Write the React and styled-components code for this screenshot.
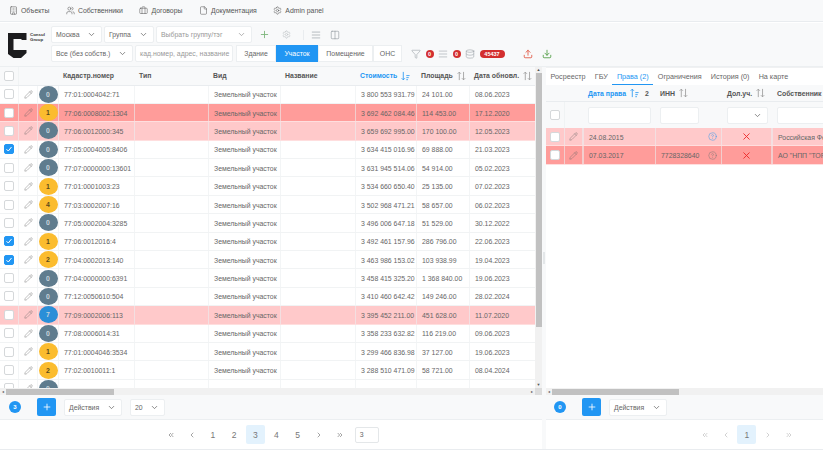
import styled, { createGlobalStyle } from "styled-components";
import {
  Building, Users, Briefcase, File, Settings, ChevronDown, Plus, AlignJustify, Columns2,
  Filter, Database, Upload, Download, Pencil, CircleHelp, X, ChevronsLeft, ChevronLeft,
  ChevronRight, ChevronsRight,
} from "lucide-react";

const Global = createGlobalStyle`
  * { box-sizing: border-box; }
  html, body { margin: 0; padding: 0; background: #fff; }
  body { font-family: "Liberation Sans", Arial, sans-serif; color: #666; overflow: hidden; }
`;

const rows = [
  ["77:01:0004042:71", "3 800 553 931.79", "24 101.00", "08.06.2023", 0],
  ["77:06:0008002:1304", "3 692 462 084.46", "114 453.00", "17.12.2020", 1, "red"],
  ["77:06:0012000:345", "3 659 692 995.00", "170 100.00", "12.05.2023", 0, "pink"],
  ["77:05:0004005:8406", "3 634 415 016.96", "69 888.00", "21.03.2023", 0, "", true],
  ["77:07:0000000:13601", "3 631 945 514.06", "54 914.00", "05.02.2023", 0],
  ["77:01:0001003:23", "3 534 660 650.40", "25 135.00", "07.02.2023", 1],
  ["77:03:0002007:16", "3 502 968 471.21", "58 657.00", "06.02.2023", 4],
  ["77:05:0002004:3285", "3 496 006 647.18", "51 529.00", "30.12.2022", 0],
  ["77:06:0012016:4", "3 492 461 157.96", "286 796.00", "22.06.2023", 1, "", true],
  ["77:04:0002013:140", "3 463 986 153.02", "103 938.99", "19.04.2023", 2, "", true],
  ["77:04:0000000:6391", "3 458 415 325.20", "1 368 840.00", "19.06.2023", 0],
  ["77:12:0050610:504", "3 410 460 642.42", "149 246.00", "28.02.2024", 0],
  ["77:09:0002006:113", "3 395 452 211.00", "451 628.00", "11.07.2020", 7, "pink"],
  ["77:08:0006014:31", "3 358 233 632.82", "116 219.00", "09.06.2023", 0],
  ["77:01:0004046:3534", "3 299 466 836.98", "37 127.00", "19.06.2023", 1],
  ["77:02:0010011:1", "3 288 510 471.09", "58 721.00", "08.04.2024", 2],
  ["", "", "", "", 0],
];

const navItems = [
  [Building, "Объекты"],
  [Users, "Собственники"],
  [Briefcase, "Договоры"],
  [File, "Документация"],
  [Settings, "Admin panel"],
];

// dir: "up" / "down" is the active sort direction, nothing means not sorted
function SortIcon({ dir }) {
  const c = dir ? "#2196f3" : "#999";
  return (
    <SortSvg width="9" height="10" viewBox="0 0 11 11" fill="none" stroke={c} strokeWidth="1">
      {dir === "down" && <path d="M2.8 0.5V10.2M0.8 8.2L2.8 10.2L4.8 8.2" />}
      {dir !== "down" && <path d="M2.8 10.5V0.8M0.8 2.8L2.8 0.8L4.8 2.8" />}
      {dir
        ? <path d="M6.5 5h4M6.5 7.5h3M6.5 10h2" />
        : <path d="M8 0.5V10.2M6 8.2L8 10.2L10 8.2" />}
    </SortSvg>
  );
}

function Check({ on }) {
  return (
    <CheckBox $on={on}>
      {on && (
        <svg width="8" height="8" viewBox="0 0 8 8" fill="none" stroke="#fff" strokeWidth="1">
          <path d="M1.5 4.2L3.3 6L6.5 2" />
        </svg>
      )}
    </CheckBox>
  );
}

export default function App() {
  return (
    <Page>
      <Global />
      <Nav>
        {navItems.map(([Icon, label]) => (
          <NavItem key={label}>
            <Icon size={9} strokeWidth={1.4} />
            {label}
          </NavItem>
        ))}
      </Nav>

      <Toolbar>
        <Logo>
          <svg width="19" height="25" viewBox="0 0 19 25">
            <path d="M0 0H18.5V7H13.5V6H5.5V17H18.5V20L13 25H5.5L0 21Z" fill="#1c1c1e" />
          </svg>
          <LogoText>Consul<br />Group</LogoText>
        </Logo>
        <Filters>
          <FilterRow>
            <Select $w={51}>Москва<ChevronDown size={9} /></Select>
            <Select $w={50}>Группа<ChevronDown size={9} /></Select>
            <Select $w={96} $muted>Выбрать группу/тэг<ChevronDown size={9} /></Select>
            <ToolIcon $ml={5} $color="#7fb77e"><Plus size={11} /></ToolIcon>
            <ToolIcon $ml={9.5} $color="#c4c8cb"><Settings size={9} /></ToolIcon>
            <ToolSep />
            <ToolIcon $ml={5.5}><AlignJustify size={10} strokeWidth={1.4} /></ToolIcon>
            <ToolIcon $ml={7}><Columns2 size={10} strokeWidth={1.4} /></ToolIcon>
          </FilterRow>
          <FilterRow>
            <Select $w={82}>Все (без собств.)<ChevronDown size={9} /></Select>
            <SearchBox>кад.номер, адрес, название</SearchBox>
            <Segments>
              <Segment $w={40}>Здание</Segment>
              <Segment $w={42} $active>Участок</Segment>
              <Segment $w={55}>Помещение</Segment>
              <Segment $w={29}>ОНС</Segment>
            </Segments>
            <Stats>
              <Filter size={10} strokeWidth={1.2} />
              <RedDot>0</RedDot>
              <AlignJustify size={10} strokeWidth={1.2} />
              <RedDot>0</RedDot>
              <Database size={10} strokeWidth={1.2} />
              <RedPill>45437</RedPill>
              <ExportIcon $color="#e0533d" $gap={14}><Upload size={10} /></ExportIcon>
              <ExportIcon $color="#4c9a3f" $gap={4.5}><Download size={10} /></ExportIcon>
            </Stats>
          </FilterRow>
        </Filters>
      </Toolbar>

      <Main>
        <LeftPanel>
          <TableArea>
            <TableWrap>
              <HeadRow>
                <CenterCell><Check /></CenterCell>
                <HeadCell />
                <HeadCell />
                <HeadCell>Кадастр.номер</HeadCell>
                <HeadCell>Тип</HeadCell>
                <HeadCell>Вид</HeadCell>
                <HeadCell>Название</HeadCell>
                <HeadCell $active>Стоимость <SortIcon dir="down" /></HeadCell>
                <HeadCell>Площадь <SortIcon /></HeadCell>
                <HeadCell>Дата обновл. <SortIcon /></HeadCell>
              </HeadRow>
              {rows.map((r, i) => (
                <Row key={i} $tone={r[5]}>
                  <CenterCell><Check on={r[6]} /></CenterCell>
                  <CenterCell><Pencil size={9} strokeWidth={1.1} color="#666" /></CenterCell>
                  <BadgeCell><Badge $n={r[4]}>{r[4]}</Badge></BadgeCell>
                  <Cell>{r[0]}</Cell>
                  <Cell />
                  <Cell>{r[0] && "Земельный участок"}</Cell>
                  <Cell />
                  <Cell>{r[1]}</Cell>
                  <Cell>{r[2]}</Cell>
                  <Cell>{r[3]}</Cell>
                </Row>
              ))}
            </TableWrap>
            <VScroll>
              <ScrollArrow>▲</ScrollArrow>
              <VThumb />
              <VSpacer />
              <ScrollArrow>▼</ScrollArrow>
            </VScroll>
          </TableArea>
          <HScroll>
            <ScrollArrow>◂</ScrollArrow>
            <HThumb $w={108} />
            <HSpacer />
            <ScrollArrow>▸</ScrollArrow>
            <ScrollCorner />
          </HScroll>
          <Actions>
            <CountDot>3</CountDot>
            <AddButton><Plus size={10} /></AddButton>
            <Select $w={58}>Действия<ChevronDown size={9} /></Select>
            <Select $w={35}>20<ChevronDown size={9} /></Select>
          </Actions>
          <Pager>
            <PageItem><ChevronsLeft size={8} /></PageItem>
            <PageItem><ChevronLeft size={8} /></PageItem>
            <PageItem>1</PageItem>
            <PageItem>2</PageItem>
            <PageItem $active>3</PageItem>
            <PageItem>4</PageItem>
            <PageItem>5</PageItem>
            <PageItem><ChevronRight size={8} /></PageItem>
            <PageItem><ChevronsRight size={8} /></PageItem>
            <PageInput>3</PageInput>
          </Pager>
        </LeftPanel>

        <Gutter><GutterGrip /></Gutter>

        <RightPanel>
          <TabsBar>
            <Tab>Росреестр</Tab>
            <Tab>ГБУ</Tab>
            <Tab $active>Права (2)</Tab>
            <Tab>Ограничения</Tab>
            <Tab>История (0)</Tab>
            <Tab>На карте</Tab>
          </TabsBar>
          <RightBody>
            <RightHead>
              <span /><span />
              <RightHeadCell $active>Дата права <SortIcon dir="up" /><SortOrder>2</SortOrder></RightHeadCell>
              <RightHeadCell>ИНН <SortIcon /></RightHeadCell>
              <span />
              <RightHeadCell>Дол.уч. <SortIcon /></RightHeadCell>
              <RightHeadCell>Собственник</RightHeadCell>
            </RightHead>
            <RightFilter>
              <CenterCell><Check /></CenterCell>
              <span />
              <FilterCell><FilterInput /></FilterCell>
              <FilterCell><FilterInput /></FilterCell>
              <span />
              <FilterCell><FilterInput><ChevronDown size={9} /></FilterInput></FilterCell>
              <FilterCell><FilterInput /></FilterCell>
            </RightFilter>
            <RightRow $tone="pink">
              <CenterCell><Check /></CenterCell>
              <CenterCell><Pencil size={9} strokeWidth={1.1} color="#666" /></CenterCell>
              <Cell>24.08.2015</Cell>
              <Cell />
              <CenterCell><CircleHelp size={9} color="#2196f3" strokeWidth={1.2} /></CenterCell>
              <CenterCell><X size={11} color="#ee2b2b" strokeWidth={2} /></CenterCell>
              <OwnerCell>Российская Федерация</OwnerCell>
            </RightRow>
            <RightRow $tone="red">
              <CenterCell><Check /></CenterCell>
              <CenterCell><Pencil size={9} strokeWidth={1.1} color="#666" /></CenterCell>
              <Cell>07.03.2017</Cell>
              <Cell>7728328640</Cell>
              <CenterCell><CircleHelp size={9} color="#777" strokeWidth={1.2} /></CenterCell>
              <CenterCell><X size={11} color="#ee2b2b" strokeWidth={2} /></CenterCell>
              <OwnerCell>АО "НПП "ТОРИЙ"</OwnerCell>
            </RightRow>
          </RightBody>
          <HScroll>
            <ScrollArrow>◂</ScrollArrow>
            <HThumb $w={127} />
          </HScroll>
          <RightActions>
            <CountDot>0</CountDot>
            <AddButton><Plus size={10} /></AddButton>
            <Select $w={58}>Действия<ChevronDown size={9} /></Select>
          </RightActions>
          <RightPager>
            <PageItem $faint><ChevronsLeft size={8} /></PageItem>
            <PageItem $faint><ChevronLeft size={8} /></PageItem>
            <PageItem $active>1</PageItem>
            <PageItem $faint><ChevronRight size={8} /></PageItem>
            <PageItem $faint><ChevronsRight size={8} /></PageItem>
          </RightPager>
        </RightPanel>
      </Main>
    </Page>
  );
}

const toneColor = { red: "#ff9c9a", pink: "#ffc9ca" };
const badgeColor = (n) => (n === 0 ? "#5f7c8e" : n === 7 ? "#2a8fd8" : "#fbbc2e");

const Page = styled.div`
  width: 823px;
  height: 450px;
  display: flex;
  flex-direction: column;
  overflow: hidden;
  background: #fff;
  font-size: 6.9px;
`;

const Nav = styled.nav`
  height: 22px;
  flex: none;
  display: flex;
  align-items: center;
  gap: 16.5px;
  padding-left: 9px;
  background: #f8f9fa;
  border-bottom: 1px solid #e9ecef;
`;

const NavItem = styled.div`
  display: flex;
  align-items: center;
  gap: 3px;
  color: #555;
`;

const Toolbar = styled.div`
  height: 45px;
  flex: none;
  display: flex;
  background: #f8f9fa;
  border-top: 1px solid #fff;
  border-bottom: 1px solid #eceff1;
`;

const Logo = styled.div`
  width: 51px;
  flex: none;
  display: flex;
  align-items: flex-start;
  gap: 3px;
  padding: 10px 0 0 8px;
`;

const LogoText = styled.div`
  font-size: 4.4px;
  line-height: 4.6px;
  font-weight: 700;
  color: #333;
`;

const Filters = styled.div`
  flex: 1;
  display: flex;
  flex-direction: column;
  gap: 2px;
  padding-top: 3px;
`;

const FilterRow = styled.div`
  height: 17px;
  display: flex;
  align-items: center;
  gap: 2px;
`;

const Select = styled.div`
  width: ${(p) => p.$w}px;
  height: 17px;
  flex: none;
  display: flex;
  align-items: center;
  justify-content: space-between;
  padding: 0 5px 0 4px;
  background: #fff;
  border: 1px solid #eceff1;
  border-radius: 2px;
  color: ${(p) => (p.$muted ? "#999" : "#666")};
  white-space: nowrap;
`;

const ToolIcon = styled.span`
  display: flex;
  margin-left: ${(p) => p.$ml}px;
  color: ${(p) => p.$color || "#8a9299"};
`;

const ToolSep = styled.span`
  width: 1px;
  height: 10px;
  margin-left: 10px;
  background: #e9ecef;
`;

const SearchBox = styled.div`
  width: 98px;
  height: 17px;
  flex: none;
  display: flex;
  align-items: center;
  padding-left: 4px;
  background: #fff;
  border: 1px solid #eceff1;
  border-radius: 2px;
  color: #999;
  white-space: nowrap;
  overflow: hidden;
`;

const Segments = styled.div`
  display: flex;
  margin-left: 1px;
  height: 17px;
`;

const Segment = styled.div`
  width: ${(p) => p.$w}px;
  display: flex;
  align-items: center;
  justify-content: center;
  background: ${(p) => (p.$active ? "#2196f3" : "#fff")};
  color: ${(p) => (p.$active ? "#fff" : "#666")};
  border: 1px solid ${(p) => (p.$active ? "#2196f3" : "#eceff1")};
`;

const Stats = styled.div`
  display: flex;
  align-items: center;
  gap: 4.5px;
  margin-left: 7px;
  color: #8a9299;
`;

const RedDot = styled.span`
  width: 8px;
  height: 8px;
  border-radius: 50%;
  display: flex;
  align-items: center;
  justify-content: center;
  background: #d32f2f;
  color: #fff;
  font-size: 5.5px;
  font-weight: 700;
`;

const RedPill = styled.span`
  width: 25px;
  height: 8px;
  border-radius: 4px;
  display: flex;
  align-items: center;
  justify-content: center;
  background: #d32f2f;
  color: #fff;
  font-size: 5.5px;
  font-weight: 700;
`;

const ExportIcon = styled.span`
  display: flex;
  margin-left: ${(p) => p.$gap}px;
  color: ${(p) => p.$color};
`;

const Main = styled.div`
  flex: 1;
  min-height: 0;
  display: flex;
  border-bottom: 1px solid #e9ecef;
`;

const LeftPanel = styled.section`
  width: 542px;
  flex: none;
  display: flex;
  flex-direction: column;
`;

const TableArea = styled.div`
  flex: 1;
  min-height: 0;
  display: flex;
`;

const TableWrap = styled.div`
  width: 535px;
  overflow: hidden;
`;

const leftColumns = "19px 19px 20px 76px 74px 72px 75px 61px 53px 66px";

const HeadRow = styled.div`
  height: 18.5px;
  display: grid;
  grid-template-columns: ${leftColumns};
  background: #f8f9fa;
  border-bottom: 1px solid #e9ecef;
`;

const HeadCell = styled.div`
  display: flex;
  align-items: center;
  gap: 4px;
  padding-left: 5px;
  font-weight: 700;
  white-space: nowrap;
  color: ${(p) => (p.$active ? "#2196f3" : "#555")};
`;

const SortSvg = styled.svg`
  flex: none;
`;

const Row = styled.div`
  height: 18.4px;
  display: grid;
  grid-template-columns: ${leftColumns};
  background: ${(p) => toneColor[p.$tone] || "#fff"};
  border-bottom: 1px solid ${(p) => (p.$tone ? "#ffdede" : "#f1f3f4")};
`;

const Cell = styled.div`
  display: flex;
  align-items: center;
  padding: 1px 0 0 5px;
  white-space: nowrap;
  overflow: hidden;
  border-left: 1px solid rgba(235, 238, 240, 0.6);
`;

const CenterCell = styled.div`
  display: flex;
  align-items: center;
  justify-content: center;
  border-right: 1px solid rgba(235, 238, 240, 0.6);
`;

const BadgeCell = styled.div`
  display: flex;
  align-items: center;
  justify-content: center;
`;

const Badge = styled.span`
  width: 19px;
  height: 17px;
  border-radius: 50%;
  display: flex;
  align-items: center;
  justify-content: center;
  background: ${(p) => badgeColor(p.$n)};
  color: ${(p) => (p.$n === 0 || p.$n === 7 ? "#c6d3db" : "#5a4a1c")};
  font-weight: 700;
`;

const CheckBox = styled.span`
  width: 10px;
  height: 10px;
  border-radius: 2px;
  display: flex;
  align-items: center;
  justify-content: center;
  background: ${(p) => (p.$on ? "#2196f3" : "#fff")};
  border: 1px solid ${(p) => (p.$on ? "#2196f3" : "#d5d8da")};
`;

const VScroll = styled.div`
  width: 7px;
  display: flex;
  flex-direction: column;
  align-items: center;
  background: #f1f1f1;
`;

const VThumb = styled.div`
  width: 6px;
  height: 254px;
  flex: none;
  background: #c1c1c1;
`;

const VSpacer = styled.div`
  flex: 1;
`;

const ScrollArrow = styled.span`
  font-size: 4px;
  line-height: 6px;
  color: #555;
  flex: none;
`;

const HScroll = styled.div`
  height: 7px;
  flex: none;
  display: flex;
  align-items: center;
  gap: 2px;
  padding-left: 2px;
  background: #f1f1f1;
`;

const HThumb = styled.div`
  width: ${(p) => p.$w}px;
  height: 6px;
  background: #c1c1c1;
`;

const HSpacer = styled.div`
  flex: 1;
`;

const ScrollCorner = styled.div`
  width: 7px;
  height: 7px;
  background: #dcdcdc;
`;

const Actions = styled.div`
  height: 25px;
  flex: none;
  display: flex;
  align-items: center;
  gap: 8px;
  padding-left: 9px;
  background: #f8f9fa;
  border-bottom: 1px solid #eceff1;
`;

const RightActions = styled(Actions)`
  padding-left: 8px;
`;

const CountDot = styled.span`
  width: 12px;
  height: 12px;
  margin-right: 8px;
  border-radius: 50%;
  display: flex;
  align-items: center;
  justify-content: center;
  background: #2196f3;
  color: #fff;
  font-size: 6px;
  font-weight: 700;
`;

const AddButton = styled.span`
  width: 19px;
  height: 18px;
  border-radius: 2px;
  display: flex;
  align-items: center;
  justify-content: center;
  background: #2196f3;
  color: #fff;
`;

const Pager = styled.div`
  height: 29px;
  flex: none;
  display: flex;
  align-items: center;
  gap: 2.2px;
  padding-left: 161px;
`;

const RightPager = styled(Pager)`
  padding-left: 149px;
`;

const PageItem = styled.span`
  width: 19px;
  height: 19px;
  display: flex;
  align-items: center;
  justify-content: center;
  border-radius: 2px;
  font-size: 8.5px;
  background: ${(p) => (p.$active ? "#e3f2fd" : "transparent")};
  color: ${(p) => (p.$faint ? "#bbb" : "#777")};
`;

const PageInput = styled.span`
  width: 24px;
  height: 16px;
  margin-left: 3px;
  padding-left: 4px;
  display: flex;
  align-items: center;
  border: 1px solid #e4e7e9;
  border-radius: 2px;
`;

const Gutter = styled.div`
  width: 4px;
  flex: none;
  display: flex;
  align-items: center;
  justify-content: center;
  background: #f8f9fa;
`;

const GutterGrip = styled.div`
  width: 2px;
  height: 12px;
  background: #e4e7e9;
`;

const RightPanel = styled.section`
  flex: 1;
  min-width: 0;
  display: flex;
  flex-direction: column;
`;

const TabsBar = styled.div`
  height: 18px;
  flex: none;
  display: flex;
  background: #fff;
  border-top: 1px solid #f0f1f2;
  font-size: 7.2px;
`;

const Tab = styled.div`
  padding: 0 4.6px;
  display: flex;
  align-items: center;
  color: ${(p) => (p.$active ? "#2196f3" : "#666")};
  border-bottom: 1px solid ${(p) => (p.$active ? "#2196f3" : "transparent")};
`;

const RightBody = styled.div`
  flex: 1;
  min-height: 0;
  overflow: hidden;
`;

const rightColumns = "19px 18px 72px 48px 19px 50px 60px";

const RightHead = styled.div`
  height: 17px;
  display: grid;
  grid-template-columns: ${rightColumns};
  background: #f8f9fa;
  border-bottom: 1px solid #e9ecef;
`;

const RightHeadCell = styled(HeadCell)`
  overflow: visible;
`;

const SortOrder = styled.span`
  margin-left: 2px;
  color: #555;
`;

const RightFilter = styled.div`
  height: 26px;
  display: grid;
  grid-template-columns: ${rightColumns};
  background: #f8f9fa;
`;

const FilterCell = styled.div`
  display: flex;
  align-items: center;
  padding: 0 4px 0 5px;
`;

const FilterInput = styled.div`
  flex: 1;
  min-width: 0;
  height: 17px;
  display: flex;
  align-items: center;
  justify-content: flex-end;
  padding-right: 5px;
  background: #fff;
  border: 1px solid #eceff1;
  border-radius: 2px;
`;

const RightRow = styled.div`
  height: 18.4px;
  display: grid;
  grid-template-columns: ${rightColumns};
  background: ${(p) => toneColor[p.$tone]};
  border-bottom: 1px solid #ffdede;
  overflow: hidden;
`;

const OwnerCell = styled(Cell)`
  overflow: visible;
`;
